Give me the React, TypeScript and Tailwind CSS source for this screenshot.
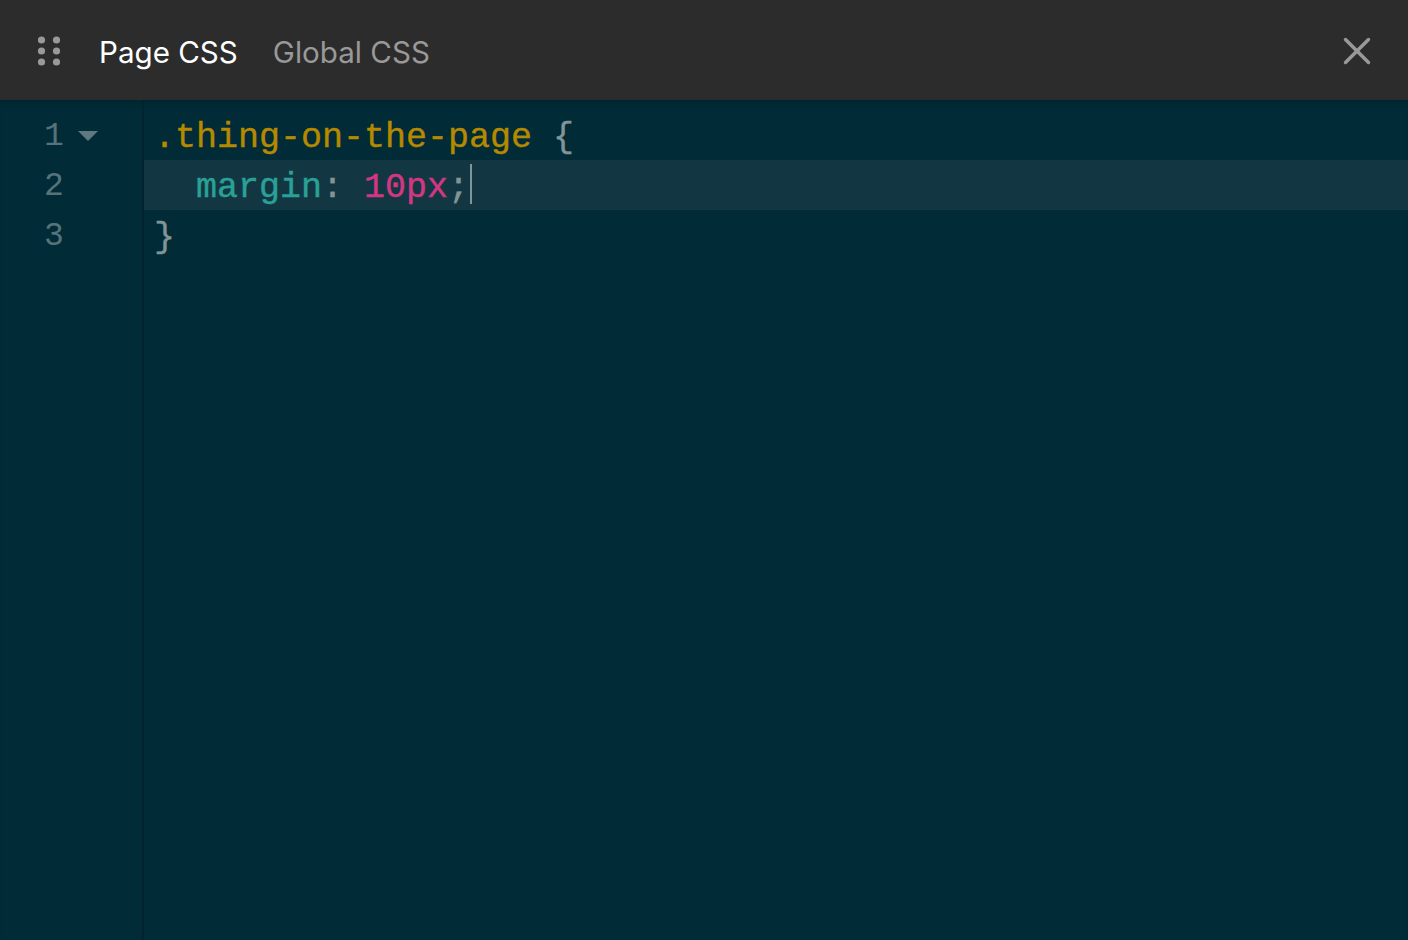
import { X } from 'lucide-react';

const gutterRows = [1, 2, 3];

function GripDots() {
  return (
    <svg width="24" height="30" viewBox="0 0 24 30" fill="#999999">
      <circle cx="4.5" cy="4" r="3.6" />
      <circle cx="19.5" cy="4" r="3.6" />
      <circle cx="4.5" cy="15" r="3.6" />
      <circle cx="19.5" cy="15" r="3.6" />
      <circle cx="4.5" cy="26" r="3.6" />
      <circle cx="19.5" cy="26" r="3.6" />
    </svg>
  );
}

export default function App() {
  return (
    <div className="flex h-[940px] w-[1408px] flex-col overflow-hidden bg-[#002b37]">
      {/* Header */}
      <div className="flex h-[100px] items-center bg-[#2c2c2c] pl-[37px] pr-[28px] pt-[2px] font-['Inter',sans-serif] text-[29.6px]">
        <GripDots />
        <span className="ml-[38px] pt-[2px] text-white">Page CSS</span>
        <span className="ml-[35px] pt-[2px] text-[#999999]">Global CSS</span>
        <button className="ml-auto text-[#999999]">
          <X size={46} strokeWidth={1.8} />
        </button>
      </div>

      {/* Editor */}
      <div className="flex flex-1 font-['Liberation_Mono',monospace] text-[35px] leading-[56px] shadow-[inset_0_8px_8px_-6px_rgba(0,0,0,0.2)] [-webkit-text-stroke:0.4px]">
        <div className="w-[144px] border-r-2 border-[#00232e] pt-[10px]">
          {gutterRows.map((row) => (
            <div key={row} className="flex h-[50px] pl-[44px] text-[33px] leading-[54px] text-[#56737b] [-webkit-text-stroke:0px]">
              <span className="w-[34px]">{row}</span>
              {row === 1 && (
                <span className="mt-[21px] h-0 w-0 border-x-[10px] border-t-[10px] border-x-transparent border-t-[#5f7980]" />
              )}
            </div>
          ))}
        </div>
        <div className="flex-1 pt-[10px] whitespace-pre">
          <div className="h-[50px] pl-[10px] text-[#b58900]">
            .thing-on-the-page <span className="text-[#839496]">{'{'}</span>
          </div>
          <div className="flex h-[50px] bg-[#133742] pl-[10px]">
            <span className="text-[#2aa198]">{'  margin'}</span>
            <span className="text-[#839496]">: </span>
            <span className="text-[#d33682]">10px</span>
            <span className="text-[#839496]">;</span>
            <span className="ml-px mt-[4px] h-[40px] w-[2px] bg-[#839496]" />
          </div>
          <div className="h-[50px] pl-[10px] text-[#839496]">{'}'}</div>
        </div>
      </div>
    </div>
  );
}
